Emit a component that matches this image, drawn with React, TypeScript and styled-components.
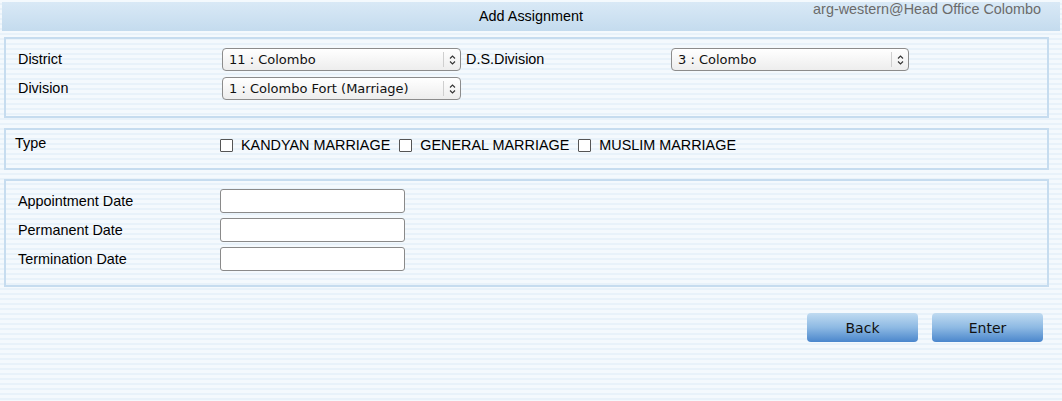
import styled, { createGlobalStyle } from "styled-components";

const GlobalStyle = createGlobalStyle`
  html, body {
    margin: 0;
    padding: 0;
  }
  body {
    width: 1062px;
    height: 401px;
    overflow: hidden;
    font-family: "Liberation Sans", Arial, sans-serif;
    background: repeating-linear-gradient(
      to bottom,
      #f4f9fd 0px,
      #f4f9fd 3px,
      #e8f2fa 3px,
      #e8f2fa 5px
    );
  }
`;

const Page = styled.div`
  display: flex;
  flex-direction: column;
  padding: 2px 0 0 0;
`;

const Header = styled.div`
  display: grid;
  grid-template-columns: 1fr auto 1fr;
  margin: 0 2px;
  height: 29px;
  background: linear-gradient(to bottom, #d9e9f6, #c4dbee);
`;

const Title = styled.div`
  grid-column: 2;
  align-self: center;
  font-size: 14.4px;
  color: #000;
  margin-top: -1px;
`;

const UserInfo = styled.div`
  grid-column: 3;
  justify-self: end;
  padding: 0 19px 0 0;
  line-height: 14px;
  font-size: 14.4px;
  color: #6b6b6b;
`;

const Section = styled.div<{ $mt: number; $h: number; $pl: number }>`
  margin: ${(p) => p.$mt}px 0 0 4px;
  width: 1045px;
  height: ${(p) => p.$h}px;
  box-sizing: border-box;
  border: 2px solid #c6dcef;
  padding-left: ${(p) => p.$pl}px;
`;

const LocationGrid = styled.div`
  display: grid;
  grid-template-columns: 204px 239px 210px 238px;
  grid-auto-rows: 23px;
  row-gap: 6px;
  align-items: center;
  padding-top: 9px;
`;

const Label = styled.label<{ $shift?: number }>`
  font-size: 14.4px;
  color: #000;
  margin-top: ${(p) => p.$shift ?? -2}px;
`;

const InlineLabel = styled(Label)`
  padding-left: 5px;
`;

const SelectBox = styled.div`
  display: flex;
  align-items: stretch;
  height: 23px;
  box-sizing: border-box;
  border: 1px solid #8c8c8c;
  border-radius: 4px;
  background: linear-gradient(to bottom, #ffffff, #ededed);
`;

const SelectText = styled.span`
  flex: 1;
  display: flex;
  align-items: center;
  padding: 0 0 1px 6px;
  font-family: "DejaVu Sans", sans-serif;
  font-size: 13px;
  color: #111;
`;

const SelectArrow = styled.span`
  width: 16px;
  display: flex;
  align-items: center;
  justify-content: center;
  margin: 3px 0;
  border-left: 1px solid #cfcfcf;
`;

const Chevrons = () => (
  <svg width="7" height="10" viewBox="0 0 7 10">
    <path d="M1 3.5 L3.5 1 L6 3.5 M1 6.5 L3.5 9 L6 6.5" stroke="#333" strokeWidth="1.1" fill="none" />
  </svg>
);

const Select = ({ value }: { value: string }) => (
  <SelectBox>
    <SelectText>{value}</SelectText>
    <SelectArrow>
      <Chevrons />
    </SelectArrow>
  </SelectBox>
);

const TypeRow = styled.div`
  display: grid;
  grid-template-columns: 205px auto;
  align-items: center;
  height: 30px;
`;

const Checks = styled.div`
  display: flex;
  align-items: center;
  gap: 9px;
`;

const CheckItem = styled.label`
  display: flex;
  align-items: center;
  gap: 8px;
  font-size: 14.4px;
  color: #000;
`;

const CheckBox = styled.span`
  width: 11px;
  height: 11px;
  border: 1px solid #555;
  border-radius: 1px;
  background: #fff;
`;

const DateGrid = styled.div`
  display: grid;
  grid-template-columns: 202px 185px;
  grid-auto-rows: 24px;
  row-gap: 5px;
  align-items: center;
  padding-top: 8px;
`;

const TextInput = styled.input`
  width: 185px;
  height: 24px;
  box-sizing: border-box;
  border: 1px solid #8a8a8a;
  border-radius: 3px;
  background: #fff;
  padding: 0 4px;
`;

const Actions = styled.div`
  display: flex;
  justify-content: flex-end;
  gap: 14px;
  padding: 26px 19px 0 0;
`;

const Button = styled.button`
  width: 111px;
  height: 29px;
  border: none;
  border-radius: 4px;
  background: linear-gradient(to bottom, #c0dbf1 0%, #8db9e3 50%, #4a86cc 100%);
  font-family: "DejaVu Sans", sans-serif;
  font-size: 14px;
  color: #111;
  padding-top: 1px;
`;

export default function App() {
  return (
    <>
      <GlobalStyle />
      <Page>
        <Header>
          <Title>Add Assignment</Title>
          <UserInfo>arg-western@Head Office Colombo</UserInfo>
        </Header>

        <Section $mt={6} $h={81} $pl={12}>
          <LocationGrid>
            <Label>District</Label>
            <Select value="11 : Colombo" />
            <InlineLabel>D.S.Division</InlineLabel>
            <Select value="3 : Colombo" />
            <Label>Division</Label>
            <Select value="1 : Colombo Fort (Marriage)" />
          </LocationGrid>
        </Section>

        <Section $mt={10} $h={42} $pl={9}>
          <TypeRow>
            <Label $shift={-4}>Type</Label>
            <Checks>
              <CheckItem>
                <CheckBox />
                KANDYAN MARRIAGE
              </CheckItem>
              <CheckItem>
                <CheckBox />
                GENERAL MARRIAGE
              </CheckItem>
              <CheckItem>
                <CheckBox />
                MUSLIM MARRIAGE
              </CheckItem>
            </Checks>
          </TypeRow>
        </Section>

        <Section $mt={9} $h={108} $pl={12}>
          <DateGrid>
            <Label $shift={0}>Appointment Date</Label>
            <TextInput />
            <Label $shift={0}>Permanent Date</Label>
            <TextInput />
            <Label $shift={0}>Termination Date</Label>
            <TextInput />
          </DateGrid>
        </Section>

        <Actions>
          <Button>Back</Button>
          <Button>Enter</Button>
        </Actions>
      </Page>
    </>
  );
}
